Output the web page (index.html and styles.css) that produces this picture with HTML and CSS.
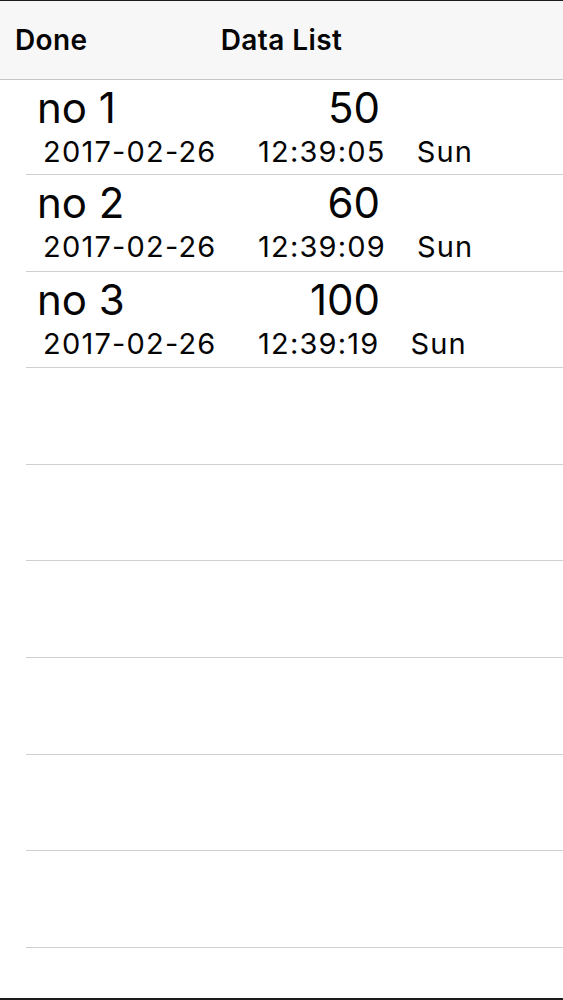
FILE: index.html
```html
<!DOCTYPE html>
<html lang="en">

<head>
    <meta charset="UTF-8">
    <title>Data List</title>
    <link rel="stylesheet" href="styles.css">
</head>

<body>
    <div class="screen">
        <header class="nav">
            <span class="nav-btn">Done</span>
            <h1 class="nav-title">Data List</h1>
            <span></span>
        </header>
        <ul class="list">
            <li class="row">
                <div class="row-top">
                    <span class="name">no 1</span>
                    <span class="value">50</span>
                </div>
                <div class="row-bottom">
                    <span class="date">2017-02-26</span>
                    <span class="time">12:39:05</span>
                    <span class="day">Sun</span>
                </div>
            </li>
            <li class="row">
                <div class="row-top">
                    <span class="name">no 2</span>
                    <span class="value">60</span>
                </div>
                <div class="row-bottom">
                    <span class="date">2017-02-26</span>
                    <span class="time">12:39:09</span>
                    <span class="day">Sun</span>
                </div>
            </li>
            <li class="row">
                <div class="row-top">
                    <span class="name">no 3</span>
                    <span class="value">100</span>
                </div>
                <div class="row-bottom">
                    <span class="date">2017-02-26</span>
                    <span class="time">12:39:19</span>
                    <span class="day">Sun</span>
                </div>
            </li>
            <!-- empty cells -->
            <li class="row"></li>
            <li class="row"></li>
            <li class="row"></li>
            <li class="row"></li>
            <li class="row"></li>
            <li class="row"></li>
        </ul>
    </div>
</body>
</html>
```
FILE: styles.css
```css
* {
    padding: 0;
    margin: 0;
}

body {
    background: #fff;
}

.screen {
    width: 563px;
    height: 1000px;
    box-sizing: border-box;
    border-top: 1px solid #1c1c1e;
    border-bottom: 2px solid #1c1c1e;
    overflow: hidden;
    font-family: Inter, "Liberation Sans", sans-serif;
    color: #050505;
}

.nav {
    height: 79px;
    box-sizing: border-box;
    padding: 0 15px;
    background: #f7f7f8;
    border-bottom: 1px solid #c6c6c8;
    display: grid;
    grid-template-columns: 1fr auto 1fr;
    align-items: center;
}

.nav-btn,
.nav-title {
    font-size: 28px;
    font-weight: 600;
    line-height: 32px;
    letter-spacing: 0.4px;
}

.list {
    list-style: none;
}

.row {
    height: 96.6px;
    box-sizing: border-box;
    margin-left: 26px;
    border-bottom: 1px solid #cfcfd2;
}

.row:first-child {
    height: 95px;
}

.row-top {
    width: 354px;
    padding: 8px 0 0 11px;
    box-sizing: border-box;
    display: flex;
    justify-content: space-between;
    font-size: 42px;
    line-height: 40px;
}

.row-bottom {
    display: flex;
    margin-top: 8px;
    padding-left: 17px;
    font-size: 29px;
    line-height: 32px;
    letter-spacing: 1.2px;
}

.date {
    width: 215px;
}

.day {
    margin-left: 31px;
}
```
